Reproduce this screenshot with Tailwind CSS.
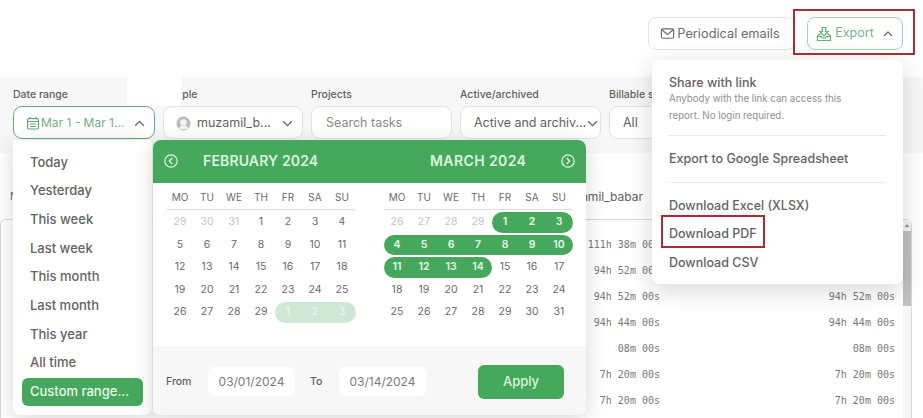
<!DOCTYPE html>
<html lang="en">
<head>
  <meta charset="UTF-8" />
  <title>Report export</title>
  <script src="https://cdn.jsdelivr.net/npm/@tailwindcss/browser@4"></script>
</head>
<body class="bg-white font-['Inter',sans-serif] text-[#5f5f5f]">
  <div class="relative w-[923px] h-[418px] overflow-hidden bg-white">

    <!-- Top actions -->
    <div class="h-[77px] flex justify-end gap-[12px] pt-[17px] pr-[20px]">
      <button class="w-[147px] h-[33px] flex items-center justify-center gap-[2px] pr-[3px] rounded-[8px] border border-[#e2e2e2] text-[12.800px] text-[#6a6a6a]">
        <svg class="w-[15px] h-[15px]" viewBox="0 0 16 16" fill="none" stroke="#6a6a6a" stroke-width="1.2"><rect x="1.500" y="3" width="13" height="10" rx="1.500"/><path d="M2 4l6 5 6-5"/></svg>
        Periodical emails
      </button>
      <button class="w-[96px] h-[33px] flex items-center justify-center gap-[3px] rounded-[8px] border border-[#a3d2ae] text-[12.500px] text-[#74b587]">
        <svg class="w-[16px] h-[16px]" viewBox="0 0 16 16" fill="none" stroke="#5fad75" stroke-width="1.200"><path d="M6.300 1.500h3.400v4h2.300L8 9.800 4 5.500h2.300z"/><path d="M4.500 7.500L1.500 10v4.500h13V10l-3-2.500"/><path d="M1.500 10.500h4l1 1.500h3l1-1.500h4"/></svg>
        Export
        <svg class="w-[12px] h-[12px] ml-[5px]" viewBox="0 0 12 12" fill="none" stroke="#666" stroke-width="1.200"><path d="M2 8l4-4 4 4"/></svg>
      </button>
    </div>

    <!-- Filters -->
    <div class="h-[76px] bg-[#f7f7f7] flex gap-[8px] pl-[13px] pt-[11px]">
      <div class="w-[142px]">
        <div class="text-[10.500px] font-medium h-[18px] leading-[14px]">Date range</div>
        <div class="h-[33px] flex items-center pt-[1px] pl-[12px] pr-[8px] rounded-[9px] border border-[#63b078] bg-white text-[12px] text-[#74ad85]">
          <svg class="w-[14px] h-[14px] mr-[1px] shrink-0" viewBox="0 0 14 14" fill="none" stroke="#5fa673" stroke-width="1.200"><rect x="1.500" y="2.500" width="11" height="10.500" rx="1.500"/><path d="M1.500 5.500h11M4 1v2.500M10 1v2.500"/><path d="M4 8h6M4 10.500h6"/></svg>
          <span class="whitespace-nowrap">Mar 1 - Mar 1...</span>
          <svg class="w-[13px] h-[13px] ml-auto" viewBox="0 0 12 12" fill="none" stroke="#666" stroke-width="1.200"><path d="M2 8l4-4 4 4"/></svg>
        </div>
      </div>
      <div class="w-[140px]">
        <div class="text-[10.500px] font-medium h-[18px] leading-[14px]">People</div>
        <div class="h-[33px] flex items-center pt-[1px] pl-[12px] pr-[8px] rounded-[9px] border border-[#e2e2e2] bg-white text-[12.500px]">
          <svg class="w-[15px] h-[15px] mr-[6px] shrink-0" viewBox="0 0 16 16"><circle cx="8" cy="8" r="7.500" fill="#bdbdbd"/><circle cx="8" cy="7" r="3.500" fill="#f3f3f3"/><path d="M2.500 14c1-3 3-4 5.500-4s4.500 1 5.500 4z" fill="#f3f3f3"/></svg>
          <span class="whitespace-nowrap">muzamil_b...</span>
          <svg class="w-[13px] h-[13px] ml-auto" viewBox="0 0 12 12" fill="none" stroke="#666" stroke-width="1.200"><path d="M2 4l4 4 4-4"/></svg>
        </div>
      </div>
      <div class="w-[141px]">
        <div class="text-[10.500px] font-medium h-[18px] leading-[14px]">Projects</div>
        <div class="h-[33px] flex items-center pt-[1px] pl-[14px] rounded-[9px] border border-[#e2e2e2] bg-white text-[12.500px] text-[#8a8a8a]">Search tasks</div>
      </div>
      <div class="w-[141px]">
        <div class="text-[10.500px] font-medium h-[18px] leading-[14px]">Active/archived</div>
        <div class="h-[33px] flex items-center pt-[1px] pl-[13px] pr-[7px] rounded-[9px] border border-[#e2e2e2] bg-white text-[12.500px]">
          <span class="whitespace-nowrap">Active and archiv...</span>
          <svg class="w-[13px] h-[13px] ml-auto shrink-0" viewBox="0 0 12 12" fill="none" stroke="#666" stroke-width="1.200"><path d="M2 4l4 4 4-4"/></svg>
        </div>
      </div>
      <div class="w-[140px]">
        <div class="text-[10.500px] font-medium h-[18px] leading-[14px]">Billable status</div>
        <div class="h-[33px] flex items-center pt-[1px] pl-[13px] rounded-[9px] border border-[#e2e2e2] bg-white text-[12.500px]">All</div>
      </div>
    </div>

    <!-- Column header behind the popups -->
    <div class="h-[66px] flex items-center pl-[10px] pt-[22px]">
      <span class="text-[10.500px]">Name</span>
      <span class="ml-auto mr-[280px] text-[12px]">muzamil_babar</span>
    </div>

    <!-- Report table -->
    <div class="relative w-[912px] h-[200px] border-t border-r border-l border-[#d8d8d8] pt-[11px] rounded-t-[6px] font-['DejaVu_Sans_Mono',monospace] text-[10px] text-[#777]">
      <div class="h-[26px] flex items-center"><span class="w-[659px] text-right">111h 38m 00s</span><span class="w-[235px] text-right">111h 38m 00s</span></div>
      <div class="h-[26px] flex items-center"><span class="w-[659px] text-right">94h 52m 00s</span><span class="w-[235px] text-right">94h 52m 00s</span></div>
      <div class="h-[26px] flex items-center"><span class="w-[659px] text-right">94h 52m 00s</span><span class="w-[235px] text-right">94h 52m 00s</span></div>
      <div class="h-[26px] flex items-center"><span class="w-[659px] text-right">94h 44m 00s</span><span class="w-[235px] text-right">94h 44m 00s</span></div>
      <div class="h-[26px] flex items-center"><span class="w-[659px] text-right">08m 00s</span><span class="w-[235px] text-right">08m 00s</span></div>
      <div class="h-[26px] flex items-center"><span class="w-[659px] text-right">7h 20m 00s</span><span class="w-[235px] text-right">7h 20m 00s</span></div>
      <div class="h-[26px] flex items-center"><span class="w-[659px] text-right">7h 20m 00s</span><span class="w-[235px] text-right">7h 20m 00s</span></div>

      <!-- Scrollbar -->
      <div class="absolute right-0 top-0 bottom-0 w-[8px] bg-[#f6f6f6] flex flex-col items-center pt-[3px]">
        <svg class="w-[6px] h-[5px] shrink-0" viewBox="0 0 6 5"><path d="M3 1l2.500 3h-5z" fill="#9a9a9a"/></svg>
        <div class="mt-[3px] w-full h-[75px] bg-[#c1c1c1]"></div>
      </div>
    </div>

    <!-- Patch over the filter bar -->
    <div class="absolute left-[127px] top-[76px] w-[55px] h-[30px] bg-white"></div>

    <!-- Date presets -->
    <div class="absolute left-[13px] top-[140px] w-[139px] h-[275px] bg-white rounded-b-[8px] shadow-[0_4px_20px_rgba(0,0,0,0.16)] flex flex-col pt-[8px] px-[9px] text-[13px] font-medium text-[#636363]">
      <div class="h-[28.700px] flex items-center pl-[8px]">Today</div>
      <div class="h-[28.700px] flex items-center pl-[8px]">Yesterday</div>
      <div class="h-[28.700px] flex items-center pl-[8px]">This week</div>
      <div class="h-[28.700px] flex items-center pl-[8px]">Last week</div>
      <div class="h-[28.700px] flex items-center pl-[8px]">This month</div>
      <div class="h-[28.700px] flex items-center pl-[8px]">Last month</div>
      <div class="h-[28.700px] flex items-center pl-[8px]">This year</div>
      <div class="h-[28.700px] flex items-center pl-[8px]">All time</div>
      <div class="h-[28px] flex items-center pl-[8px] rounded-[6px] bg-[#45a85c] text-[#eafbe9]">Custom range...</div>
    </div>

    <!-- Calendar -->
    <div class="absolute left-[153px] top-[140px] w-[433px] h-[275px] bg-white rounded-t-[8px] rounded-b-[8px] shadow-[0_4px_20px_rgba(0,0,0,0.16)] flex flex-col overflow-hidden">
      <div class="h-[43px] shrink-0 bg-[#45a85c] flex items-center pb-[2px] px-[11px] text-[#dcf7dd] text-[14px] font-semibold tracking-[0.15px]">
        <svg class="w-[14px] h-[14px]" viewBox="0 0 14 14" fill="none" stroke="#e3f9e3" stroke-width="1.200"><circle cx="7" cy="7" r="6.200"/><path d="M8.300 4L5.300 7l3 3"/></svg>
        <span class="ml-[25px] w-[227px] whitespace-nowrap">FEBRUARY 2024</span>
        <span class="whitespace-nowrap tracking-[0.4px]">MARCH 2024</span>
        <svg class="w-[14px] h-[14px] ml-auto" viewBox="0 0 14 14" fill="none" stroke="#e3f9e3" stroke-width="1.200"><circle cx="7" cy="7" r="6.200"/><path d="M5.700 4l3 3-3 3"/></svg>
      </div>

      <div class="h-[163px] shrink-0 flex gap-[28px] pl-[13.500px] text-[10.500px] text-[#6a6a6a]">
        <div class="w-[189px]">
          <div class="grid grid-cols-7 h-[27px] items-center text-center text-[10px] border-b border-[#dddddd] pt-[2px]"><span>MO</span><span>TU</span><span>WE</span><span>TH</span><span>FR</span><span>SA</span><span>SU</span></div>
          <div class="grid grid-cols-7 auto-rows-[20.500px] gap-y-[2px] mt-[2px] items-center text-center">
            <span class="text-[#c4c4c4]">29</span><span class="text-[#c4c4c4]">30</span><span class="text-[#c4c4c4]">31</span><span>1</span><span>2</span><span>3</span><span>4</span>
            <span>5</span><span>6</span><span>7</span><span>8</span><span>9</span><span>10</span><span>11</span>
            <span>12</span><span>13</span><span>14</span><span>15</span><span>16</span><span>17</span><span>18</span>
            <span>19</span><span>20</span><span>21</span><span>22</span><span>23</span><span>24</span><span>25</span>
            <span>26</span><span>27</span><span>28</span><span>29</span>
            <span class="h-[20.500px] leading-[20.500px] bg-[#cfe8d6] text-[#eef8ef] rounded-l-full">1</span>
            <span class="h-[20.500px] leading-[20.500px] bg-[#cfe8d6] text-[#eef8ef]">2</span>
            <span class="h-[20.500px] leading-[20.500px] bg-[#cfe8d6] text-[#eef8ef] rounded-r-full">3</span>
          </div>
        </div>
        <div class="w-[189px]">
          <div class="grid grid-cols-7 h-[27px] items-center text-center text-[10px] border-b border-[#dddddd] pt-[2px]"><span>MO</span><span>TU</span><span>WE</span><span>TH</span><span>FR</span><span>SA</span><span>SU</span></div>
          <div class="grid grid-cols-7 auto-rows-[20.500px] gap-y-[2px] mt-[2px] items-center text-center">
            <span class="text-[#c4c4c4]">26</span><span class="text-[#c4c4c4]">27</span><span class="text-[#c4c4c4]">28</span><span class="text-[#c4c4c4]">29</span>
            <span class="h-[20.500px] leading-[20.500px] bg-[#45a85c] text-[#e6fae6] font-semibold rounded-l-full">1</span>
            <span class="h-[20.500px] leading-[20.500px] bg-[#45a85c] text-[#e6fae6] font-semibold">2</span>
            <span class="h-[20.500px] leading-[20.500px] bg-[#45a85c] text-[#e6fae6] font-semibold rounded-r-full">3</span>
            <span class="h-[20.500px] leading-[20.500px] bg-[#45a85c] text-[#e6fae6] font-semibold rounded-l-full">4</span>
            <span class="h-[20.500px] leading-[20.500px] bg-[#45a85c] text-[#e6fae6] font-semibold">5</span>
            <span class="h-[20.500px] leading-[20.500px] bg-[#45a85c] text-[#e6fae6] font-semibold">6</span>
            <span class="h-[20.500px] leading-[20.500px] bg-[#45a85c] text-[#e6fae6] font-semibold">7</span>
            <span class="h-[20.500px] leading-[20.500px] bg-[#45a85c] text-[#e6fae6] font-semibold">8</span>
            <span class="h-[20.500px] leading-[20.500px] bg-[#45a85c] text-[#e6fae6] font-semibold">9</span>
            <span class="h-[20.500px] leading-[20.500px] bg-[#45a85c] text-[#e6fae6] font-semibold rounded-r-full">10</span>
            <span class="h-[20.500px] leading-[20.500px] bg-[#45a85c] text-[#e6fae6] font-semibold rounded-l-full">11</span>
            <span class="h-[20.500px] leading-[20.500px] bg-[#45a85c] text-[#e6fae6] font-semibold">12</span>
            <span class="h-[20.500px] leading-[20.500px] bg-[#45a85c] text-[#e6fae6] font-semibold">13</span>
            <span class="h-[20.500px] leading-[20.500px] bg-[#45a85c] text-[#e6fae6] font-semibold rounded-r-full">14</span>
            <span>15</span><span>16</span><span>17</span>
            <span>18</span><span>19</span><span>20</span><span>21</span><span>22</span><span>23</span><span>24</span>
            <span>25</span><span>26</span><span>27</span><span>28</span><span>29</span><span>30</span><span>31</span>
          </div>
        </div>
      </div>

      <div class="flex-1 bg-[#f7f7f7] flex items-center pt-[2px] pl-[13px] text-[10.500px] font-medium">
        <span class="w-[42px]">From</span>
        <div class="w-[87px] h-[29px] flex items-center justify-center rounded-[6px] bg-white text-[12px] font-normal text-[#7c7c7c]">03/01/2024</div>
        <span class="ml-[15px] w-[29px]">To</span>
        <div class="w-[87px] h-[29px] flex items-center justify-center rounded-[6px] bg-white text-[12px] font-normal text-[#7c7c7c]">03/14/2024</div>
        <button class="ml-[52px] w-[86px] h-[34px] rounded-[6px] bg-[#45a85c] text-[13px] font-medium text-[#dcf7dd]">Apply</button>
      </div>
    </div>

    <!-- Export menu -->
    <div class="absolute left-[652px] top-[60px] w-[251px] h-[224px] bg-white rounded-[8px] shadow-[0_6px_24px_rgba(0,0,0,0.16)] px-[17px] pt-[16px] text-[12.500px] text-[#636363]">
      <div class="h-[14px] leading-[14px] font-medium">Share with link</div>
      <p class="text-[9.700px] leading-[17px] text-[#8f8f8f] w-[200px]">Anybody with the link can access this report. No login required.</p>
      <hr class="mt-[11px] border-[#e8e8e8]" />
      <div class="h-[46px] flex items-center font-medium">Export to Google Spreadsheet</div>
      <hr class="border-[#e8e8e8]" />
      <div class="mt-[9px] h-[28.500px] flex items-center font-medium">Download Excel (XLSX)</div>
      <div class="h-[28.500px] flex items-center font-medium">Download PDF</div>
      <div class="h-[28.500px] flex items-center font-medium">Download CSV</div>
    </div>

    <!-- Red callouts -->
    <div class="absolute left-[793px] top-[9px] w-[122px] h-[46px] border-[2.500px] border-[#a92b33]"></div>
    <div class="absolute left-[661px] top-[215px] w-[104px] h-[33px] border-[2.500px] border-[#a92b33]"></div>
  </div>
</body>
</html>
